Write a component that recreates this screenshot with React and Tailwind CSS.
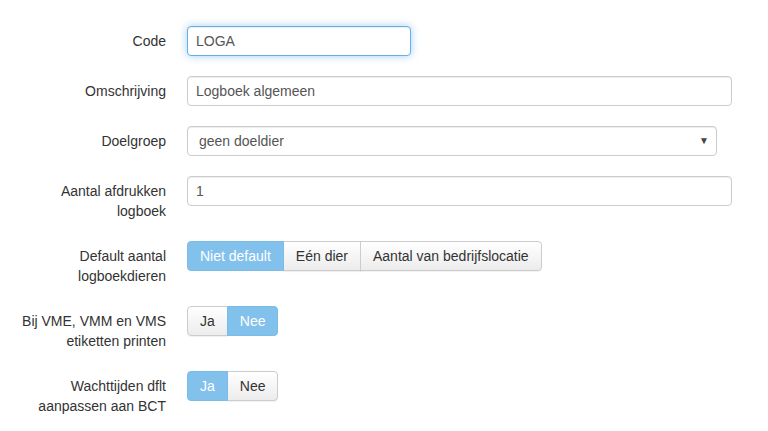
const baseCls =
    "h-[30px] rounded-[4px] border bg-white px-[8px] text-[14px] leading-5 text-[#555] outline-none";
const inputCls = baseCls + " border-[#ccc] shadow-[inset_0_1px_1px_rgba(0,0,0,0.075)]";

function Row({ label, children }) {
    return (
        <div className="flex items-start mb-[20px]">
            <label className="w-[166px] shrink-0 text-right pt-[5px] text-[14px] leading-5 text-[#333]">
                {label}
            </label>
            <div className="ml-[21px]">{children}</div>
        </div>
    );
}

/** Bootstrap-like button group, one option active */
function BtnGroup({ options, active }) {
    return (
        <div className="flex">
            {options.map((o, i) => {
                const first = i === 0;
                const last = i === options.length - 1;
                const on = i === active;
                return (
                    <button
                        key={o}
                        type="button"
                        className={[
                            "h-[30px] px-[12px] text-[14px] leading-5 border",
                            first ? "rounded-l-[4px]" : "-ml-px",
                            last ? "rounded-r-[4px]" : "",
                            on
                                ? "bg-[#83c1ed] border-[#7bbbe8] text-white relative z-10"
                                : "bg-gradient-to-b from-white to-[#ececec] border-[#ccc] text-[#333] shadow-[0_1px_1px_rgba(0,0,0,0.06)]",
                        ].join(" ")}
                    >
                        {o}
                    </button>
                );
            })}
        </div>
    );
}

export default function App() {
    return (
        <div
            className="w-[768px] h-[431px] overflow-hidden bg-white pt-[26px]"
            style={{ fontFamily: '"Liberation Sans", Arial, sans-serif' }}
        >
            <Row label="Code">
                <input
                    readOnly
                    value="LOGA"
                    className={baseCls + " w-[224px] border-[#66afe9] shadow-[inset_0_1px_1px_rgba(0,0,0,0.075),0_0_8px_rgba(102,175,233,0.6)]"}
                />
            </Row>
            <Row label="Omschrijving">
                <input readOnly value="Logboek algemeen" className={inputCls + " w-[545px]"} />
            </Row>
            <Row label="Doelgroep">
                <div className={inputCls + " w-[530px] flex items-center justify-between pl-[11px] pr-[7px]"}>
                    <span>geen doeldier</span>
                    <span className="text-[10px] text-[#444]">▼</span>
                </div>
            </Row>
            <Row label={<>Aantal afdrukken<br />logboek</>}>
                <input readOnly value="1" className={inputCls + " w-[545px]"} />
            </Row>
            <Row label={<>Default aantal<br />logboekdieren</>}>
                <BtnGroup options={["Niet default", "Eén dier", "Aantal van bedrijfslocatie"]} active={0} />
            </Row>
            <Row label={<>Bij VME, VMM en VMS<br />etiketten printen</>}>
                <BtnGroup options={["Ja", "Nee"]} active={1} />
            </Row>
            <Row label={<>Wachttijden dflt<br />aanpassen aan BCT</>}>
                <BtnGroup options={["Ja", "Nee"]} active={0} />
            </Row>
        </div>
    );
}
